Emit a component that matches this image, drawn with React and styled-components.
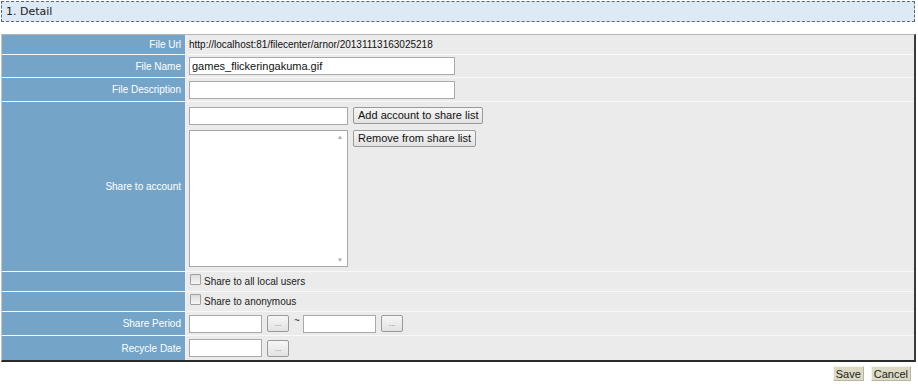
import React from "react";
import styled, { createGlobalStyle } from "styled-components";

const GlobalStyle = createGlobalStyle`
	html, body {
		margin: 0;
		padding: 0;
		background: #ffffff;
		font-family: "Liberation Sans", Arial, sans-serif;
	}
`;

function App() {
	return (
		<Page>
			<GlobalStyle />
			<Legend>1. Detail</Legend>
			<FormTable>
				<tbody>
					<Row h={20}>
						<Label>File Url</Label>
						<Value>http://localhost:81/filecenter/arnor/20131113163025218</Value>
					</Row>
					<Row h={23}>
						<Label>File Name</Label>
						<Value>
							<TextBox w={266} defaultValue="games_flickeringakuma.gif" />
						</Value>
					</Row>
					<Row h={24}>
						<Label>File Description</Label>
						<Value>
							<TextBox w={266} />
						</Value>
					</Row>
					<Row h={170}>
						<Label>Share to account</Label>
						<Value className="top">
							<ShareGrid>
								<div className="left">
									<TextBox w={159} />
									<ListBox>
										<div className="track">
											<span>▲</span>
											<span>▼</span>
										</div>
									</ListBox>
								</div>
								<div className="right">
									<Button>Add account to share list</Button>
									<Button>Remove from share list</Button>
								</div>
							</ShareGrid>
						</Value>
					</Row>
					<Row h={20}>
						<Label />
						<Value>
							<Check>
								<Box />
								Share to all local users
							</Check>
						</Value>
					</Row>
					<Row h={20}>
						<Label />
						<Value>
							<Check>
								<Box />
								Share to anonymous
							</Check>
						</Value>
					</Row>
					<Row h={24}>
						<Label>Share Period</Label>
						<Value>
							<Inline>
								<TextBox w={73} />
								<Button small>...</Button>
								<Tilde>~</Tilde>
								<TextBox w={73} />
								<Button small>...</Button>
							</Inline>
						</Value>
					</Row>
					<Row h={24}>
						<Label>Recycle Date</Label>
						<Value>
							<Inline>
								<TextBox w={73} />
								<Button small>...</Button>
							</Inline>
						</Value>
					</Row>
				</tbody>
			</FormTable>
			<Actions>
				<ActionButton>Save</ActionButton>
				<ActionButton>Cancel</ActionButton>
			</Actions>
		</Page>
	);
}

export default App;

const Page = styled.div`
	width: 918px;
	height: 389px;
	overflow: hidden;
	padding-top: 1px;
	box-sizing: border-box;
`;

const Legend = styled.div`
	width: 914px;
	height: 21px;
	box-sizing: border-box;
	margin-left: 1px;
	border: 1px dashed #5a6a7a;
	background: #dde9f4;
	font-family: "DejaVu Sans", Verdana, sans-serif;
	font-size: 11px;
	color: #222;
	line-height: 19px;
	padding-left: 4px;
`;

const FormTable = styled.table`
	margin: 12px 0 0 1px;
	width: 915px;
	border-collapse: separate;
	border-spacing: 0;
	border-top: 1px solid #b4b4b4;
	border-left: 1px solid #c8c8c8;
	border-right: 2px solid #3a3a3a;
	border-bottom: 2px solid #2a2a2a;
	background: #f6f6f6;
`;

const Row = styled.tr`
	height: ${(p) => p.h}px;

	td {
		border-bottom: 1px solid #f8f8f8;
	}

	&:last-child td {
		border-bottom: none;
	}
`;

const Label = styled.td`
	width: 179px;
	background: #74a5c9;
	color: #ffffff;
	font-size: 10px;
	text-align: right;
	vertical-align: middle;
	padding: 0 4px 0 0;
	border-right: 1px solid #f0f0f0;
	white-space: nowrap;
`;

const Value = styled.td`
	background: #ebebeb;
	color: #111;
	font-size: 10px;
	vertical-align: middle;
	padding: 0 0 0 3px;

	&.top {
		vertical-align: top;
		padding-top: 5px;
	}
`;

const TextBox = styled.input.attrs({ type: "text" })`
	display: block;
	width: ${(p) => p.w}px;
	height: 18px;
	box-sizing: border-box;
	border: 1px solid #a8a8a8;
	background: #ffffff;
	font-family: "Liberation Sans", Arial, sans-serif;
	font-size: 11px;
	color: #111;
	padding: 0 2px;
	margin: 0;
	outline: none;
`;

const ShareGrid = styled.div`
	display: flex;
	gap: 5px;

	.left {
		display: flex;
		flex-direction: column;
		gap: 5px;
	}

	.right {
		display: flex;
		flex-direction: column;
		align-items: flex-start;
		gap: 6px;
	}
`;

const ListBox = styled.div`
	width: 159px;
	height: 137px;
	box-sizing: border-box;
	border: 1px solid #a8a8a8;
	background: #ffffff;
	display: flex;
	justify-content: flex-end;

	.track {
		width: 14px;
		display: flex;
		flex-direction: column;
		justify-content: space-between;
		align-items: center;
		padding: 3px 0;
		font-size: 6px;
		color: #a8a8a8;
	}
`;

const Button = styled.button`
	height: 17px;
	box-sizing: border-box;
	margin: 0;
	padding: ${(p) => (p.small ? "0" : "0 4px")};
	width: ${(p) => (p.small ? "22px" : "auto")};
	border: 1px solid #9a9a9a;
	border-radius: 2px;
	background: linear-gradient(#f6f6f6, #e2e2e2);
	font-family: "Liberation Sans", Arial, sans-serif;
	font-size: ${(p) => (p.small ? "8px" : "11px")};
	color: ${(p) => (p.small ? "#777" : "#111")};
	line-height: 15px;
	white-space: nowrap;
`;

const Inline = styled.div`
	display: flex;
	align-items: center;
	gap: 5px;
`;

const Tilde = styled.span`
	font-size: 10px;
	color: #333;
	width: 4px;
	margin-top: -6px;
`;

const Check = styled.label`
	display: flex;
	align-items: center;
	gap: 3px;
	font-size: 10px;
	color: #222;
	padding-left: 1px;
`;

const Box = styled.span`
	display: inline-block;
	width: 9px;
	height: 9px;
	border: 1px solid #a0a0a0;
	border-radius: 1px;
	background: linear-gradient(#dcdcdc, #f6f6f6);
	margin-top: -4px;
`;

const Actions = styled.div`
	display: flex;
	justify-content: flex-end;
	gap: 7px;
	margin-top: 4px;
	padding-right: 7px;
`;

const ActionButton = styled.button`
	height: 15px;
	box-sizing: border-box;
	margin: 0;
	padding: 0 2px;
	border: 1px solid #f4f4ea;
	border-right-color: #b8b6a0;
	border-bottom-color: #b8b6a0;
	background: #dcdac2;
	font-family: "Liberation Sans", Arial, sans-serif;
	font-size: 11px;
	color: #222;
	line-height: 12px;
`;
